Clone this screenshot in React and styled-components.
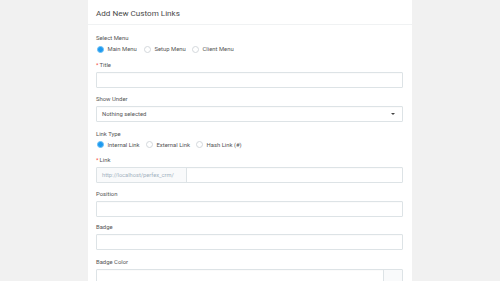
import React from "react";
import styled, { createGlobalStyle } from "styled-components";

const Global = createGlobalStyle`
  html, body { margin: 0; padding: 0; background: #f1f1f1; }
  body { font-family: Roboto, "Liberation Sans", sans-serif; color: #4a4a4a; }
  * { box-sizing: border-box; }
`;

const Page = styled.div`
  width: 500px;
  height: 281px;
  overflow: hidden;
  display: flex;
  align-items: flex-start;
  padding-left: 88px;
`;

const Panel = styled.div`
  width: 324px;
  min-height: 281px;
  background: #ffffff;
  display: flex;
  flex-direction: column;
  flex: none;
`;

const Header = styled.div`
  flex: none;
  height: 25px;
  padding: 1px 8px 0;
  display: flex;
  align-items: center;
  border-bottom: 1px solid #f0f2f3;
  font-size: 8.1px;
  color: #4a4a4a;
`;

const Body = styled.div`
  flex: none;
  padding: 9px 9px 0 8px;
  display: flex;
  flex-direction: column;
`;

const Group = styled.div`
  flex: none;
  display: flex;
  flex-direction: column;
  margin-bottom: ${(p) => p.$mb ?? 7}px;
`;

const Label = styled.div`
  flex: none;
  font-size: 5.9px;
  line-height: 8px;
  height: 8px;
  color: #555;
  margin-bottom: 3px;
  white-space: nowrap;
`;

const Req = styled.span`
  color: #f44336;
  margin-right: 1px;
`;

const RadioRow = styled.div`
  flex: none;
  display: flex;
  align-items: center;
  height: 8px;
  padding-left: 0.5px;
`;

const RadioItem = styled.div`
  display: flex;
  align-items: center;
  width: ${(p) => p.$w}px;
  font-size: 5.9px;
  color: #555;
  white-space: nowrap;
`;

const Circle = styled.span`
  width: 7px;
  height: 7px;
  border-radius: 50%;
  margin-right: 4px;
  flex: none;
  border: 1px solid ${(p) => (p.$on ? "#6ec1f5" : "#d3d8dc")};
  background: ${(p) => (p.$on ? "#1e9af0" : "#fff")};
`;

const Input = styled.div`
  flex: none;
  height: 16px;
  border: 1px solid #dde3e6;
  border-radius: 1px;
  background: #fff;
  box-shadow: inset 0 1px 1px rgba(0, 0, 0, 0.02);
  display: flex;
  align-items: center;
  overflow: hidden;
`;

const SelectBox = styled(Input)`
  justify-content: space-between;
  padding: 0 7px 0 5px;
  font-size: 5.9px;
  color: #555;
`;

const Caret = styled.span`
  width: 0;
  height: 0;
  border-left: 2px solid transparent;
  border-right: 2px solid transparent;
  border-top: 2px solid #444;
`;

const Addon = styled.div`
  height: 100%;
  width: ${(p) => p.$w}px;
  background: #f9fafb;
  border-${(p) => (p.$right ? "left" : "right")}: 1px solid #dde3e6;
  display: flex;
  align-items: center;
  padding-left: 5px;
  font-size: 5.7px;
  color: #a3b2c0;
  white-space: nowrap;
  flex: none;
`;

const Spacer = styled.div`
  flex: 1;
`;

function Radios({ items, widths }) {
  return (
    <RadioRow>
      {items.map((t, i) => (
        <RadioItem key={t} $w={widths[i]}>
          <Circle $on={i === 0} />
          {t}
        </RadioItem>
      ))}
    </RadioRow>
  );
}

export default function App() {
  return (
    <>
      <Global />
      <Page>
        <Panel>
          <Header>Add New Custom Links</Header>
          <Body>
            <Group $mb={8}>
              <Label>Select Menu</Label>
              <Radios
                items={["Main Menu", "Setup Menu", "Client Menu"]}
                widths={[47, 48, 50]}
              />
            </Group>
            <Group>
              <Label>
                <Req>*</Req>Title
              </Label>
              <Input />
            </Group>
            <Group $mb={7.5}>
              <Label>Show Under</Label>
              <SelectBox>
                <span>Nothing selected</span>
                <Caret />
              </SelectBox>
            </Group>
            <Group $mb={7}>
              <Label>Link Type</Label>
              <Radios
                items={["Internal Link", "External Link", "Hash Link (#)"]}
                widths={[49, 50, 60]}
              />
            </Group>
            <Group $mb={7.5}>
              <Label>
                <Req>*</Req>Link
              </Label>
              <Input>
                <Addon $w={90}>http://localhost/perfex_crm/</Addon>
              </Input>
            </Group>
            <Group $mb={6}>
              <Label>Position</Label>
              <Input />
            </Group>
            <Group $mb={7.5}>
              <Label>Badge</Label>
              <Input />
            </Group>
            <Group>
              <Label>Badge Color</Label>
              <Input>
                <Spacer />
                <Addon $right $w={19} />
              </Input>
            </Group>
          </Body>
        </Panel>
      </Page>
    </>
  );
}
